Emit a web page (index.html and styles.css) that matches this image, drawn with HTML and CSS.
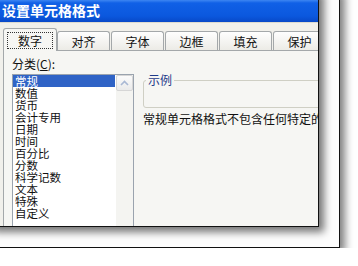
FILE: index.html
```
<!DOCTYPE html>
<html lang="zh-CN">
<head>
    <meta charset="UTF-8">
    <title>设置单元格格式</title>
    <link rel="stylesheet" href="styles.css">
</head>
<body>
    <div class="stage">
        <div class="frame">
            <div class="dialog">
                <div class="titlebar">设置单元格格式</div>

                <div class="tabs">
                    <div class="tab active"><span class="focus">数字</span></div>
                    <div class="tab">对齐</div>
                    <div class="tab">字体</div>
                    <div class="tab">边框</div>
                    <div class="tab">填充</div>
                    <div class="tab">保护</div>
                </div>

                <div class="panel">
                    <div class="category">
                        <div class="label">分类(<u>C</u>):</div>
                        <div class="listbox">
                            <ul class="items">
                                <li class="selected">常规</li>
                                <li>数值</li>
                                <li>货币</li>
                                <li>会计专用</li>
                                <li>日期</li>
                                <li>时间</li>
                                <li>百分比</li>
                                <li>分数</li>
                                <li>科学记数</li>
                                <li>文本</li>
                                <li>特殊</li>
                                <li>自定义</li>
                            </ul>
                            <div class="scrollbar">
                                <div class="scroll-up">
                                    <svg width="9" height="6" viewBox="0 0 9 6">
                                        <path d="M1 5 L4.5 1.5 L8 5" fill="none" stroke="#A9B8D4" stroke-width="1.6"/>
                                    </svg>
                                </div>
                            </div>
                        </div>
                    </div>

                    <div class="detail">
                        <fieldset class="sample">
                            <legend>示例</legend>
                        </fieldset>
                        <p class="desc">常规单元格格式不包含任何特定的数字格式。</p>
                    </div>
                </div>
            </div>
        </div>
    </div>
</body>
</html>
```

FILE: styles.css
```
body {
    margin: 0;
    background: #fff;
    font-family: "Noto Sans CJK SC", "Liberation Sans", sans-serif;
    font-size: 12px;
    color: #111;
    overflow: hidden;
}

/* the cropped screenshot runs off the top and left edge */
.stage {
    margin: -12px 0 0 -12px;
}

.frame {
    box-sizing: border-box;
    width: 352px;
    height: 260px;
    background: #fdfdfd;
    border-right: 1px solid #111;
    border-bottom: 1px solid #111;
    box-shadow: 5px 5px 8px rgba(0,0,0,0.5);
}

.dialog {
    box-sizing: border-box;
    width: 331px;
    height: 239px;
    padding: 12px 0 0 12px;
    background: #f1f0eb;
    border-right: 1px solid #111;
    border-bottom: 1px solid #111;
    box-shadow: 5px 5px 8px rgba(0,0,0,0.55);
    overflow: hidden;
}

.titlebar {
    height: 22px;
    line-height: 21px;
    padding-left: 2px;
    color: #fff;
    font-size: 14px;
    font-weight: bold;
    background: linear-gradient(#3d86f2 0, #1060e6 3px, #0b58de 16px, #0848c8 22px);
    border-bottom: 1px solid #dcdad0;
}

.tabs {
    display: flex;
    align-items: flex-end;
    height: 22px;
    margin: 5px 0 0 3px;
}
.tab {
    box-sizing: border-box;
    flex: none;
    width: 53px;
    height: 19px;
    margin-right: 1px;
    display: flex;
    align-items: center;
    justify-content: center;
    border: 1px solid #a4a8aa;
    border-bottom: none;
    border-radius: 3px 3px 0 0;
    background: linear-gradient(#fefefe, #ecebe6);
}
.tab.active {
    position: relative;
    z-index: 1;
    width: 54px;
    margin-right: 0;
    height: 23px;
    margin-bottom: -1px;
    background: #f6f6f3;
}
.focus {
    padding: 0 10px;
    line-height: 15px;
    border: 1px dotted #333;
}

.panel {
    display: flex;
    height: 200px;
    margin-left: 3px;
    border-top: 1px solid #a4a8aa;
    border-left: 1px solid #a4a8aa;
    background: #f6f6f3;
}

.category {
    flex: none;
    padding-left: 8px;
}
.label {
    margin-top: 6px;
    line-height: 14px;
}
.listbox {
    box-sizing: border-box;
    display: flex;
    width: 122px;
    height: 170px;
    margin-top: 3px;
    background: #fff;
    border: 1px solid #9aa3ae;
}
.items {
    list-style: none;
    margin: 0;
    padding: 0;
    width: 103px;
}
.items li {
    padding-left: 2px;
    height: 12px;
    font-size: 11.5px;
    line-height: 12px;
    white-space: nowrap;
}
.items li.selected {
    margin-right: 1px;
    background: #2f63c6;
    color: #fff;
}
.scrollbar {
    width: 17px;
    background: #f4f4f1;
}
.scroll-up {
    box-sizing: border-box;
    height: 16px;
    display: flex;
    align-items: center;
    justify-content: center;
    background: linear-gradient(#fbfbfb, #eaeaea);
    border: 1px solid #d6d6d6;
    border-radius: 2px;
}

.detail {
    flex: none;
    margin: 22px 0 0 9px;
    white-space: nowrap;
}
.sample {
    box-sizing: border-box;
    width: 200px;
    height: 35px;
    margin: 0;
    padding: 0 0 0 2px;
    border: 1px solid #cfcfc4;
    border-radius: 3px;
}
.sample legend {
    padding: 0 2px;
    line-height: 14px;
    color: #1f3b8a;
}
.desc {
    margin: 4px 0 0;
    line-height: 14px;
}
```
